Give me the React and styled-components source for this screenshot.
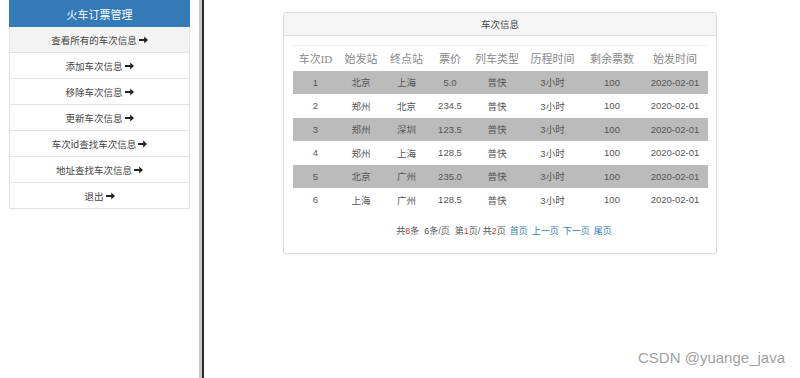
import React from "react";
import styled, { createGlobalStyle } from "styled-components";

const Global = createGlobalStyle`
  html, body { margin: 0; padding: 0; background: #fff; }
  body { font-family: "Liberation Sans", Arial, "Noto Sans CJK SC", sans-serif; color: #333; }
  * { box-sizing: border-box; }
`;

const Page = styled.div`
  position: relative;
  display: flex;
  width: 800px;
  height: 378px;
  overflow: hidden;
`;

const Side = styled.div`
  width: 199px;
  padding-left: 9px;
  flex-shrink: 0;
`;

const Menu = styled.div`
  width: 181px;
`;

const Title = styled.div`
  height: 27px;
  background: #337ab7;
  color: #fff;
  font-size: 11px;
  display: flex;
  align-items: center;
  justify-content: center;
  font-family: "Noto Sans CJK SC", sans-serif;
`;

const Item = styled.div`
  height: 26px;
  display: flex;
  align-items: center;
  justify-content: center;
  gap: 2px;
  font-size: 9.5px;
  color: #444;
  background: ${(p) => (p.$active ? "#f3f3f3" : "#fff")};
  border: 1px solid #e2e2e2;
  border-top: none;
  font-family: "Noto Sans CJK SC", sans-serif;
`;

const Divider = styled.div`
  width: 5px;
  flex-shrink: 0;
  height: 100%;
  background: linear-gradient(to right, #c8c8c8 0, #c8c8c8 3px, #2a2a2a 3px, #2a2a2a 5px);
`;

const Main = styled.div`
  flex: 1;
  display: flex;
  justify-content: center;
  align-items: flex-start;
  padding-top: 12px;
  padding-right: 4px;
`;

const Panel = styled.div`
  width: 434px;
  border: 1px solid #ddd;
  border-radius: 3px;
  background: #fff;
  box-shadow: 0 1px 1px rgba(0, 0, 0, 0.04);
`;

const PanelHead = styled.div`
  height: 23px;
  background: #f5f5f5;
  border-bottom: 1px solid #ddd;
  display: flex;
  align-items: center;
  justify-content: center;
  font-size: 9.5px;
  color: #444;
  font-family: "Noto Sans CJK SC", sans-serif;
  border-radius: 3px 3px 0 0;
`;

const PanelBody = styled.div`
  padding: 9px 9px 16px 9px;
`;

const Table = styled.table`
  width: 415px;
  border-collapse: collapse;
  table-layout: fixed;
  border-top: 1px solid #eee;
`;

const Th = styled.th`
  height: 25px;
  font-weight: normal;
  font-size: 11px;
  color: #888;
  text-align: center;
  padding: 0;
  font-family: "Liberation Serif", "Noto Sans CJK SC", serif;
  vertical-align: middle;
`;

const Tr = styled.tr`
  background: ${(p) => (p.$shade ? "#bbbbbb" : "#fff")};
`;

const Td = styled.td`
  height: 23.5px;
  font-size: 9.5px;
  color: #555;
  text-align: center;
  padding: 0;
  vertical-align: middle;
  font-family: "Liberation Sans", Arial, "Noto Sans CJK SC", sans-serif;
`;

const Pager = styled.div`
  margin-top: 12px;
  font-size: 9px;
  color: #555;
  text-align: center;
  padding-left: 8px;
  font-family: "Liberation Sans", Arial, "Noto Sans CJK SC", sans-serif;
  white-space: pre;
`;

const Red = styled.span`
  color: #e4393c;
`;

const Link = styled.a`
  color: #337ab7;
  text-decoration: none;
  margin-left: 4px;
`;

const Watermark = styled.div`
  position: absolute;
  right: 15px;
  bottom: 12px;
  font-size: 15px;
  color: #a0a0a0;
  font-family: "Liberation Sans", Arial, sans-serif;
`;

const Arrow = () => (
  <svg width="9" height="8" viewBox="0 0 9 8" aria-hidden="true">
    <path d="M0 3h5.2V0.6L9 4 5.2 7.4V5H0z" fill="#222" />
  </svg>
);

const menu = [
  "查看所有的车次信息",
  "添加车次信息",
  "移除车次信息",
  "更新车次信息",
  "车次id查找车次信息",
  "地址查找车次信息",
  "退出",
];

const cols = [45, 46, 45, 42, 52, 59, 60, 66];
const heads = ["车次ID", "始发站", "终点站", "票价", "列车类型", "历程时间", "剩余票数", "始发时间"];
const rows = [
  ["1", "北京", "上海", "5.0"],
  ["2", "郑州", "北京", "234.5"],
  ["3", "郑州", "深圳", "123.5"],
  ["4", "郑州", "上海", "128.5"],
  ["5", "北京", "广州", "235.0"],
  ["6", "上海", "广州", "128.5"],
];

export default function App() {
  return (
    <>
      <Global />
      <Page>
        <Side>
          <Menu>
            <Title>火车订票管理</Title>
            {menu.map((m, i) => (
              <Item key={m} $active={i === 0}>
                <span>{m}</span>
                <Arrow />
              </Item>
            ))}
          </Menu>
        </Side>
        <Divider />
        <Main>
          <Panel>
            <PanelHead>车次信息</PanelHead>
            <PanelBody>
              <Table>
                <colgroup>
                  {cols.map((w, i) => (
                    <col key={i} style={{ width: w }} />
                  ))}
                </colgroup>
                <thead>
                  <tr>
                    {heads.map((h) => (
                      <Th key={h}>{h}</Th>
                    ))}
                  </tr>
                </thead>
                <tbody>
                  {rows.map((r, i) => (
                    <Tr key={r[0]} $shade={i % 2 === 0}>
                      {[...r, "普快", "3小时", "100", "2020-02-01"].map((c, j) => (
                        <Td key={j}>{c}</Td>
                      ))}
                    </Tr>
                  ))}
                </tbody>
              </Table>
              <Pager>
                共<Red>8</Red>条  6条/页  第<Red>1</Red>页/ 共<Red>2</Red>页
                <Link>首页</Link>
                <Link>上一页</Link>
                <Link>下一页</Link>
                <Link>尾页</Link>
              </Pager>
            </PanelBody>
          </Panel>
        </Main>
        <Watermark>CSDN @yuange_java</Watermark>
      </Page>
    </>
  );
}
